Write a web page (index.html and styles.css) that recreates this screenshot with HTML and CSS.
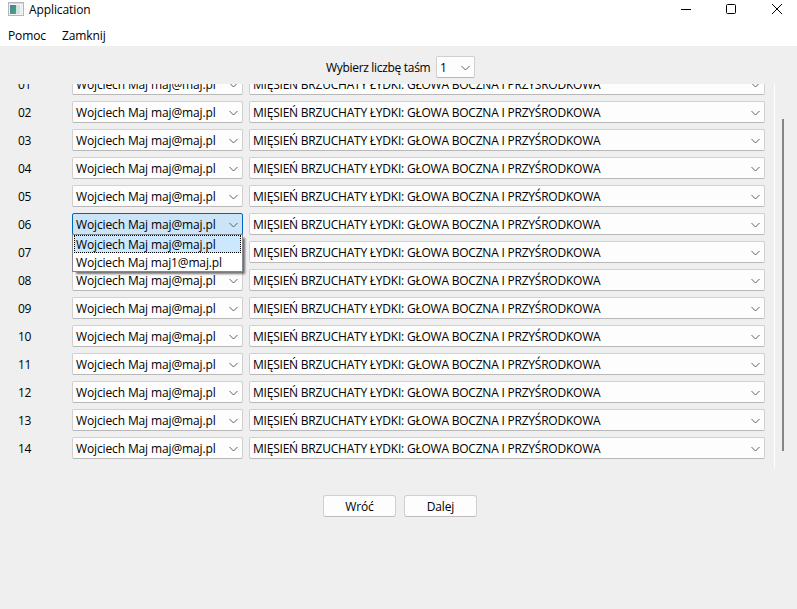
FILE: index.html
```
<!DOCTYPE html>
<html lang="pl">
<head>
<meta charset="utf-8">
<title>Application</title>
<link rel="stylesheet" href="styles.css">
</head>
<body>
<header class="titlebar">
  <svg class="app-icon" width="16" height="14" viewBox="0 0 16 14"><defs><linearGradient id="g" x2="0.6" y2="1"><stop stop-color="#4b78ad"/><stop offset="1" stop-color="#4ba56f"/></linearGradient></defs><path fill="#b4b8be" d="M0 0h16v14H0z"/><path fill="#f2f3f5" d="M1 1h14v12H1z"/><path fill="#d5d9df" d="M1 1h14v1H1z"/><path fill="url(#g)" d="M2 3h6v9H2z"/><path fill="#d0e2e2" d="M8 3h4v9H8z"/><path fill="#e8eaec" d="M13 3h1v9h-1z"/></svg>
  <span class="title">Application</span>
  <svg class="controls" width="104" height="12" viewBox="0 0 104 12" fill="none" stroke="#000"><path d="M0 5.5h10"/><rect x="45.5" y=".5" width="9" height="9" rx="1"/><path d="M91 0l10 10M101 0L91 10"/></svg>
</header>
<nav class="menu"><span>Pomoc</span><span>Zamknij</span></nav>
<div class="picker"><span class="t-pick">Wybierz liczbę taśm</span><div class="combo small"><span>1</span></div></div>
<main class="scroll"><div class="rows" id="rows"></div><div class="bar"><div class="thumb"></div></div></main>
<footer class="actions"><button>Wróć</button><button>Dalej</button></footer>
<script src="app.js"></script>
</body>
</html>
```
FILE: styles.css
```
* { box-sizing: border-box; }
body { margin: 0; width: 797px; height: 609px; overflow: hidden; background: #efefef; color: #000; font: 12px/16px "Open Sans", "Noto Sans", sans-serif; }
span { white-space: nowrap; }
.titlebar { height: 20px; background: #fff; display: flex; align-items: flex-start; padding: 2px 12px 0 8px; }
.title { margin: 0 0 0 5px; letter-spacing: -.1px; }
.controls { margin: 2px 0 0 auto; }
.menu { height: 26px; background: #fff; display: flex; gap: 16px; padding: 8px 8px 0; letter-spacing: -.1px; }
.picker { height: 38px; display: flex; padding: 10px 0 0 326px; align-items: flex-start; }
.t-pick { width: 110px; margin-top: 4px; letter-spacing: -.31px; }
.combo { position: relative; height: 22px; background: #fdfdfd; border: 1px solid #d0d0d0; border-bottom-color: #b8b8b8; border-radius: 2px; display: flex; justify-content: space-between; align-items: center; padding: 2px 4px 0 3px; }
.combo > svg { flex: none; }
.small { width: 39px; }
.scroll { height: 384px; overflow: hidden; display: flex; }
.rows { width: 774px; margin-top: -11px; padding-left: 18px; display: flex; flex-direction: column; gap: 6px; flex: none; }
.row { display: grid; grid-template-columns: 54px 171px 516px; height: 22px; flex: none; align-items: center; }
.row .exercise { margin-left: 6px; width: 516px; }
.num { padding-top: 2px; letter-spacing: -.4px; }
.t-user { letter-spacing: -.13px; }
.t-alt { letter-spacing: -.15px; }
.t-ex { letter-spacing: -.22px; }
.bar { width: 23px; border-left: 1px solid #fff; padding: 35px 0 0 7px; }
.thumb { width: 2px; height: 332px; background: #868686; }
.actions { display: flex; gap: 8px; padding: 27px 0 0 323px; }
button { width: 73px; height: 22px; padding: 2px 0 0; font: inherit; letter-spacing: -.15px; color: #000; background: #fdfdfd; border: 1px solid #d0d0d0; border-bottom-color: #bcbcbc; border-radius: 3px; }
.open { background: #cce4f7; border-color: #0067b8; z-index: 2; }
.popup { position: absolute; left: -1px; top: 20px; width: 171px; height: 38px; padding: 0 1px; background: #fff; border: 1px solid #828790; box-shadow: 3px 3px 2px -1px rgba(0,0,0,.55); }
.popup div { height: 18px; padding-left: 2px; line-height: 19px; }
.popup .sel { background: #cce8ff; outline: 1px dotted #000; outline-offset: -1px; }
```
FILE: app.js
```
const chevron = '<svg width="9" height="6" viewBox="0 0 9 6" fill="none" stroke="#606060"><path d="M.5 1l4 4 4-4"/></svg>';
const popup = '<div class="popup"><div class="sel"><span class="t-user">Wojciech Maj maj@maj.pl</span></div><div><span class="t-alt">Wojciech Maj maj1@maj.pl</span></div></div>';
let html = '';
for (let i = 1; i <= 14; i++) {
  const open = i === 6;
  html += `<div class="row"><span class="num">${String(i).padStart(2, '0')}</span>` +
    `<div class="combo${open ? ' open' : ''}"><span class="t-user">Wojciech Maj maj@maj.pl</span>${chevron}${open ? popup : ''}</div>` +
    `<div class="combo exercise"><span class="t-ex">MIĘSIEŃ BRZUCHATY ŁYDKI: GŁOWA BOCZNA I PRZYŚRODKOWA</span>${chevron}</div></div>`;
}
document.getElementById('rows').innerHTML = html;
document.querySelector('.small').insertAdjacentHTML('beforeend', chevron);
```
